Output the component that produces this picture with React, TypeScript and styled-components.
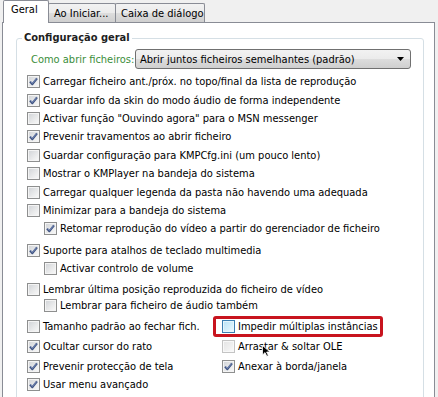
import React from "react";
import styled, { createGlobalStyle, css } from "styled-components";

const Global = createGlobalStyle`
  html, body { margin: 0; padding: 0; background: #f0f0f0; }
  body {
    font-family: "DejaVu Sans Condensed", "DejaVu Sans", sans-serif;
    font-size: 11px;
    color: #000;
  }
`;

const Window = styled.div`
  width: 438px;
  height: 397px;
  overflow: hidden;
  background: #f0f0f0;
  display: flex;
  flex-direction: column;
`;

const TabStrip = styled.div`
  display: flex;
  align-items: flex-end;
  height: 24px;
  padding-left: 3px;
  position: relative;
  z-index: 1;
`;

const Tab = styled.div<{ $active?: boolean; $w: number; $pl: number }>`
  box-sizing: border-box;
  width: ${(p) => p.$w}px;
  padding-left: ${(p) => p.$pl}px;
  border: 1px solid #898c95;
  border-bottom: none;
  border-radius: 2px 2px 0 0;
  white-space: nowrap;
  display: flex;
  align-items: center;
  color: #000;
  ${(p) =>
    p.$active
      ? css`
          height: 23px;
          margin-bottom: -1px;
          background: #fff;
          padding-bottom: 5px;
        `
      : css`
          height: 19px;
          margin-left: -1px;
          background: linear-gradient(#f2f2f2 0%, #ebebeb 50%, #dddddd 51%, #cfcfcf 100%);
          padding-top: 1px;
        `}
`;

const Panel = styled.div`
  margin-left: 2px;
  width: 433px;
  box-sizing: border-box;
  flex: 1;
  background: #fff;
  border: 1px solid #898c95;
  border-bottom: none;
  padding: 8px 10px 0 13px;
`;

const Group = styled.fieldset`
  margin: 0;
  padding: 0 0 10px 0;
  border: 1px solid #d5dfe5;
  border-radius: 3px;
  min-inline-size: 0;
`;

const Legend = styled.legend`
  margin-left: 5px;
  padding: 0 2px;
  font-weight: bold;
  font-size: 11px;
  line-height: 14px;
  color: #1e1e1e;
`;

const ComboRow = styled.div`
  display: flex;
  align-items: center;
  margin-top: 4px;
  height: 20px;
  padding-left: 14px;
`;

const ComboLabel = styled.span`
  color: #3a8e3a;
  width: 104px;
  white-space: nowrap;
`;

const Select = styled.div`
  box-sizing: border-box;
  width: 276px;
  height: 20px;
  border: 1px solid #707070;
  border-radius: 3px;
  background: linear-gradient(#f2f2f2 0%, #ebebeb 50%, #dddddd 51%, #cfcfcf 100%);
  display: flex;
  align-items: center;
  justify-content: space-between;
  padding: 0 6px 0 4px;
  white-space: nowrap;
`;

const List = styled.div`
  display: flex;
  flex-direction: column;
  margin-top: 3px;
`;

const Row = styled.div<{ $indent?: boolean; $mt?: number }>`
  display: flex;
  align-items: center;
  height: 18px;
  margin-top: ${(p) => p.$mt ?? 0}px;
  padding-left: ${(p) => (p.$indent ? 27 : 10)}px;
`;

const Cell = styled.div<{ $w?: number }>`
  display: flex;
  align-items: center;
  ${(p) => (p.$w ? `width: ${p.$w}px;` : "")}
  position: relative;
`;

const Item = styled.label`
  display: inline-flex;
  align-items: center;
  gap: 3px;
  white-space: nowrap;
  position: relative;
  color: #000;
`;

const Highlight = styled.span`
  display: inline-flex;
  position: relative;
  &::after {
    content: "";
    position: absolute;
    left: -9px;
    right: -5px;
    top: -4px;
    bottom: -4px;
    border: 3px solid #c8141e;
    border-radius: 3px;
    pointer-events: none;
  }
`;

type BoxState = "normal" | "hover" | "faded";

const Box = styled.span<{ $state: BoxState }>`
  box-sizing: border-box;
  width: 13px;
  height: 13px;
  flex: none;
  display: inline-flex;
  align-items: center;
  justify-content: center;
  border: 1px solid #8e8f8f;
  box-shadow: inset 0 0 0 1px #f4f4f4;
  background: linear-gradient(135deg, #cfd2d6 0%, #e8e9ea 55%, #fafafa 100%);
  ${(p) =>
    p.$state === "hover" &&
    css`
      border-color: #3c7fb1;
      box-shadow: inset 0 0 0 1px #e6f6fc;
      background: linear-gradient(135deg, #b9e4f7 0%, #d7f0fb 60%, #eefafe 100%);
    `}
  ${(p) =>
    p.$state === "faded" &&
    css`
      border-color: #c4c4c4;
      box-shadow: inset 0 0 0 1px #f8f8f8;
      background: linear-gradient(135deg, #e4e4e4 0%, #f0f0f0 60%, #fbfbfb 100%);
    `}
`;

const CursorIcon = styled.svg`
  position: absolute;
  left: 40px;
  top: 5px;
`;

function Check({
  checked,
  state = "normal",
  children,
}: {
  checked?: boolean;
  state?: BoxState;
  children: React.ReactNode;
}) {
  return (
    <Item>
      <Box $state={state}>
        {checked && (
          <svg width="9" height="9" viewBox="0 0 9 9">
            <path d="M1 4.6 L3.4 7.2 L8 1.3" fill="none" stroke="#3f5382" strokeWidth="2.1" strokeLinejoin="round" />
            <path d="M1.6 4.6 L3.4 6.4 L7.6 1.6" fill="none" stroke="#8ea1cc" strokeWidth="0.8" />
          </svg>
        )}
      </Box>
      <span>{children}</span>
    </Item>
  );
}

type RowData = { label: string; checked?: boolean; indent?: boolean; mt?: number };

const topRows: RowData[] = [
  { label: "Carregar ficheiro ant./próx. no topo/final da lista de reprodução", checked: true },
  { label: "Guardar info da skin do modo áudio de forma independente", checked: true, mt: 1 },
  { label: 'Activar função "Ouvindo agora" para o MSN messenger' },
  { label: "Prevenir travamentos ao abrir ficheiro", checked: true },
  { label: "Guardar configuração para KMPCfg.ini (um pouco lento)", mt: 1 },
  { label: "Mostrar o KMPlayer na bandeja do sistema" },
  { label: "Carregar qualquer legenda da pasta não havendo uma adequada", mt: 1 },
  { label: "Minimizar para a bandeja do sistema" },
  { label: "Retomar reprodução do vídeo a partir do gerenciador de ficheiro", checked: true, indent: true },
  { label: "Suporte para atalhos de teclado multimedia", checked: true, mt: 4 },
  { label: "Activar controlo de volume", indent: true },
  { label: "Lembrar última posição reproduzida do ficheiro de vídeo", mt: 3 },
  { label: "Lembrar para ficheiro de áudio também", indent: true, mt: -2 },
];

export default function App() {
  return (
    <>
      <Global />
      <Window>
        <TabStrip>
          <Tab $active $w={46} $pl={7}>Geral</Tab>
          <Tab $w={68} $pl={5}>Ao Iniciar...</Tab>
          <Tab $w={90} $pl={5}>Caixa de diálogo</Tab>
        </TabStrip>
        <Panel>
          <Group>
            <Legend>Configuração geral</Legend>
            <ComboRow>
              <ComboLabel>Como abrir ficheiros:</ComboLabel>
              <Select>
                <span>Abrir juntos ficheiros semelhantes (padrão)</span>
                <svg width="7" height="4" viewBox="0 0 7 4">
                  <path d="M0 0 H7 L3.5 4 Z" fill="#000" />
                </svg>
              </Select>
            </ComboRow>
            <List>
              {topRows.map((r) => (
                <Row key={r.label} $indent={r.indent} $mt={r.mt}>
                  <Check checked={r.checked}>{r.label}</Check>
                </Row>
              ))}
              <Row $mt={3}>
                <Cell $w={195}>
                  <Check>Tamanho padrão ao fechar fich.</Check>
                </Cell>
                <Cell>
                  <Highlight>
                    <Check state="hover">Impedir múltiplas instâncias</Check>
                  </Highlight>
                </Cell>
              </Row>
              <Row $mt={2}>
                <Cell $w={195}>
                  <Check checked>Ocultar cursor do rato</Check>
                </Cell>
                <Cell>
                  <Check state="faded">Arrastar &amp; soltar OLE</Check>
                  <CursorIcon width="10" height="12" viewBox="0 0 10 12">
                    <path d="M0.5 0.5 L0.5 10 L3 7.6 L4.8 11.3 L6.4 10.6 L4.6 7 L8 7 Z" fill="#000" stroke="#fff" strokeWidth="0.8" />
                  </CursorIcon>
                </Cell>
              </Row>
              <Row $mt={2}>
                <Cell $w={195}>
                  <Check checked>Prevenir protecção de tela</Check>
                </Cell>
                <Cell>
                  <Check checked>Anexar à borda/janela</Check>
                </Cell>
              </Row>
              <Row>
                <Check checked>Usar menu avançado</Check>
              </Row>
            </List>
          </Group>
        </Panel>
      </Window>
    </>
  );
}
